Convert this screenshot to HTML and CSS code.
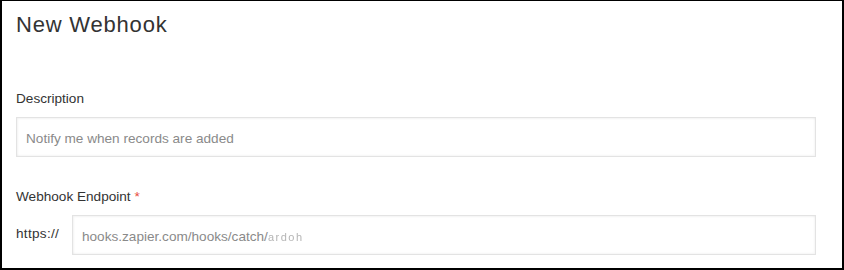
FILE: index.html
```html
<!DOCTYPE html>
<html>
<head>
<meta charset="utf-8">
<link rel="stylesheet" href="styles.css">
</head>
<body>
<div class="panel">
  <h1 class="title">New Webhook</h1>
  <div class="field">
    <div class="label">Description</div>
    <div class="input"><span class="placeholder">Notify me when records are added</span></div>
  </div>
  <div class="field field-endpoint">
    <div class="label">Webhook Endpoint <span class="req">*</span></div>
    <div class="url-row">
      <span class="scheme">https://</span>
      <div class="input input-url"><span class="placeholder">hooks.zapier.com/hooks/catch/<span class="masked">ardoh</span></span></div>
    </div>
  </div>
</div>
</body>
</html>
```

FILE: styles.css
```css
html, body {
  margin: 0;
  padding: 0;
  background: #fff;
}
body {
  width: 844px;
  height: 270px;
  overflow: hidden;
  font-family: "Liberation Sans", Arial, sans-serif;
  color: #333;
}
.panel {
  box-sizing: border-box;
  width: 844px;
  height: 270px;
  border: 2px solid #000;
  border-top-width: 1px;
  padding: 9px 26px 0 14px;
}
.title {
  margin: 0 0 49px;
  font-size: 22px;
  font-weight: normal;
  line-height: 30px;
  letter-spacing: 0.8px;
  color: #333;
}
.label {
  font-size: 13.6px;
  line-height: 20px;
  color: #333;
  margin-bottom: 8px;
}
.req {
  color: #e74c3c;
}
.field-endpoint {
  margin-top: 30px;
}
.input {
  box-sizing: border-box;
  height: 40px;
  border: 1px solid #e3e3e3;
  box-shadow: inset 1px 1px 2px rgba(0,0,0,0.05), inset -1px -1px 2px rgba(0,0,0,0.04);
  background: #fff;
  padding: 3px 9px 0;
  display: flex;
  align-items: center;
  font-size: 13.6px;
}
.placeholder {
  color: #8a8a8a;
  white-space: nowrap;
}
.url-row {
  display: flex;
  align-items: center;
}
.scheme {
  width: 56px;
  flex: none;
  font-size: 13.6px;
  line-height: 20px;
  margin-top: -2px;
  color: #333;
  letter-spacing: 0.3px;
}
.input-url {
  flex: 1;
}
.masked {
  display: inline-block;
  font-size: 11px;
  letter-spacing: 1.5px;
  color: #b5b5b5;
  filter: blur(0.5px);
}
```
